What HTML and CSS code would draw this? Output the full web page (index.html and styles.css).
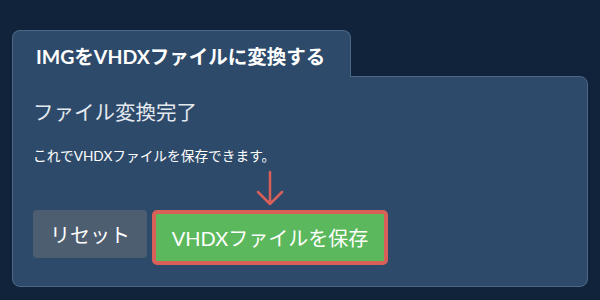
FILE: index.html
```html
<!DOCTYPE html>
<html lang="ja">
<head>
    <meta charset="UTF-8">
    <title>IMGをVHDXファイルに変換する</title>
    <link rel="stylesheet" href="styles.css">
</head>
<body>
    <div class="converter">
        <!-- Tab -->
        <div class="tab">IMGをVHDXファイルに変換する</div>

        <!-- Result panel -->
        <div class="panel">
            <h2 class="panel-title">ファイル変換完了</h2>
            <p class="panel-text">これでVHDXファイルを保存できます。</p>
            <div class="actions">
                <button class="btn btn-reset" type="button">リセット</button>
                <div class="highlight">
                    <svg class="arrow" width="30" height="36" viewBox="0 0 30 36">
                        <path d="M15 1 V33 M3 21 L15 33 L27 21" fill="none" stroke="#d95f59" stroke-width="2.5" stroke-linecap="round" stroke-linejoin="round"/>
                    </svg>
                    <button class="btn btn-save" type="button">VHDXファイルを保存</button>
                </div>
            </div>
        </div>
    </div>
</body>
</html>
```

FILE: styles.css
```css
/* Basic Reset */
body, html {
    margin: 0;
    padding: 0;
    font-family: Lato, "Noto Sans CJK JP", sans-serif;
    background-color: #11233a;
}

.converter {
    padding: 30px 12px 0 12px;
}

/* Tab on top of the panel */
.tab {
    display: inline-block;
    position: relative;
    z-index: 1;
    box-sizing: border-box;
    width: 339px;
    height: 47px;
    margin-bottom: -1px;
    padding: 10px 0 0 23px;
    background-color: #2d4a6a;
    border: 1px solid #4c6887;
    border-bottom: none;
    border-radius: 8px 8px 0 0;
    color: #ffffff;
    font-size: 19.5px;
    font-weight: bold;
}

/* Panel */
.panel {
    box-sizing: border-box;
    width: 576px;
    height: 211px;
    padding: 20px 20px 0 20px;
    background-color: #2d4a6a;
    border: 1px solid #4c6887;
    border-radius: 0 8px 8px 8px;
}

.panel-title {
    margin: 0;
    color: #e4e9ef;
    font-size: 20.5px;
    font-weight: normal;
    line-height: 30px;
}

.panel-text {
    margin: 19px 0 0 0;
    color: #ffffff;
    font-size: 13.7px;
    line-height: 20px;
}

.actions {
    display: flex;
    align-items: flex-start;
    gap: 5px;
    margin-top: 44px;
}

.btn {
    border: none;
    color: #ffffff;
    font-family: Lato, "Noto Sans CJK JP", sans-serif;
    font-size: 20px;
    cursor: pointer;
}

.btn-reset {
    width: 114px;
    height: 48px;
    background-color: #4d5e70;
    border-radius: 4px;
}

/* Highlighted save button with arrow */
.highlight {
    position: relative;
}

.arrow {
    position: absolute;
    left: 103px;
    top: -39px;
}

.btn-save {
    display: block;
    box-sizing: border-box;
    width: 236px;
    height: 55px;
    background-color: #5cb85c;
    border: 4px solid #d95f59;
    border-radius: 5px;
}
```
